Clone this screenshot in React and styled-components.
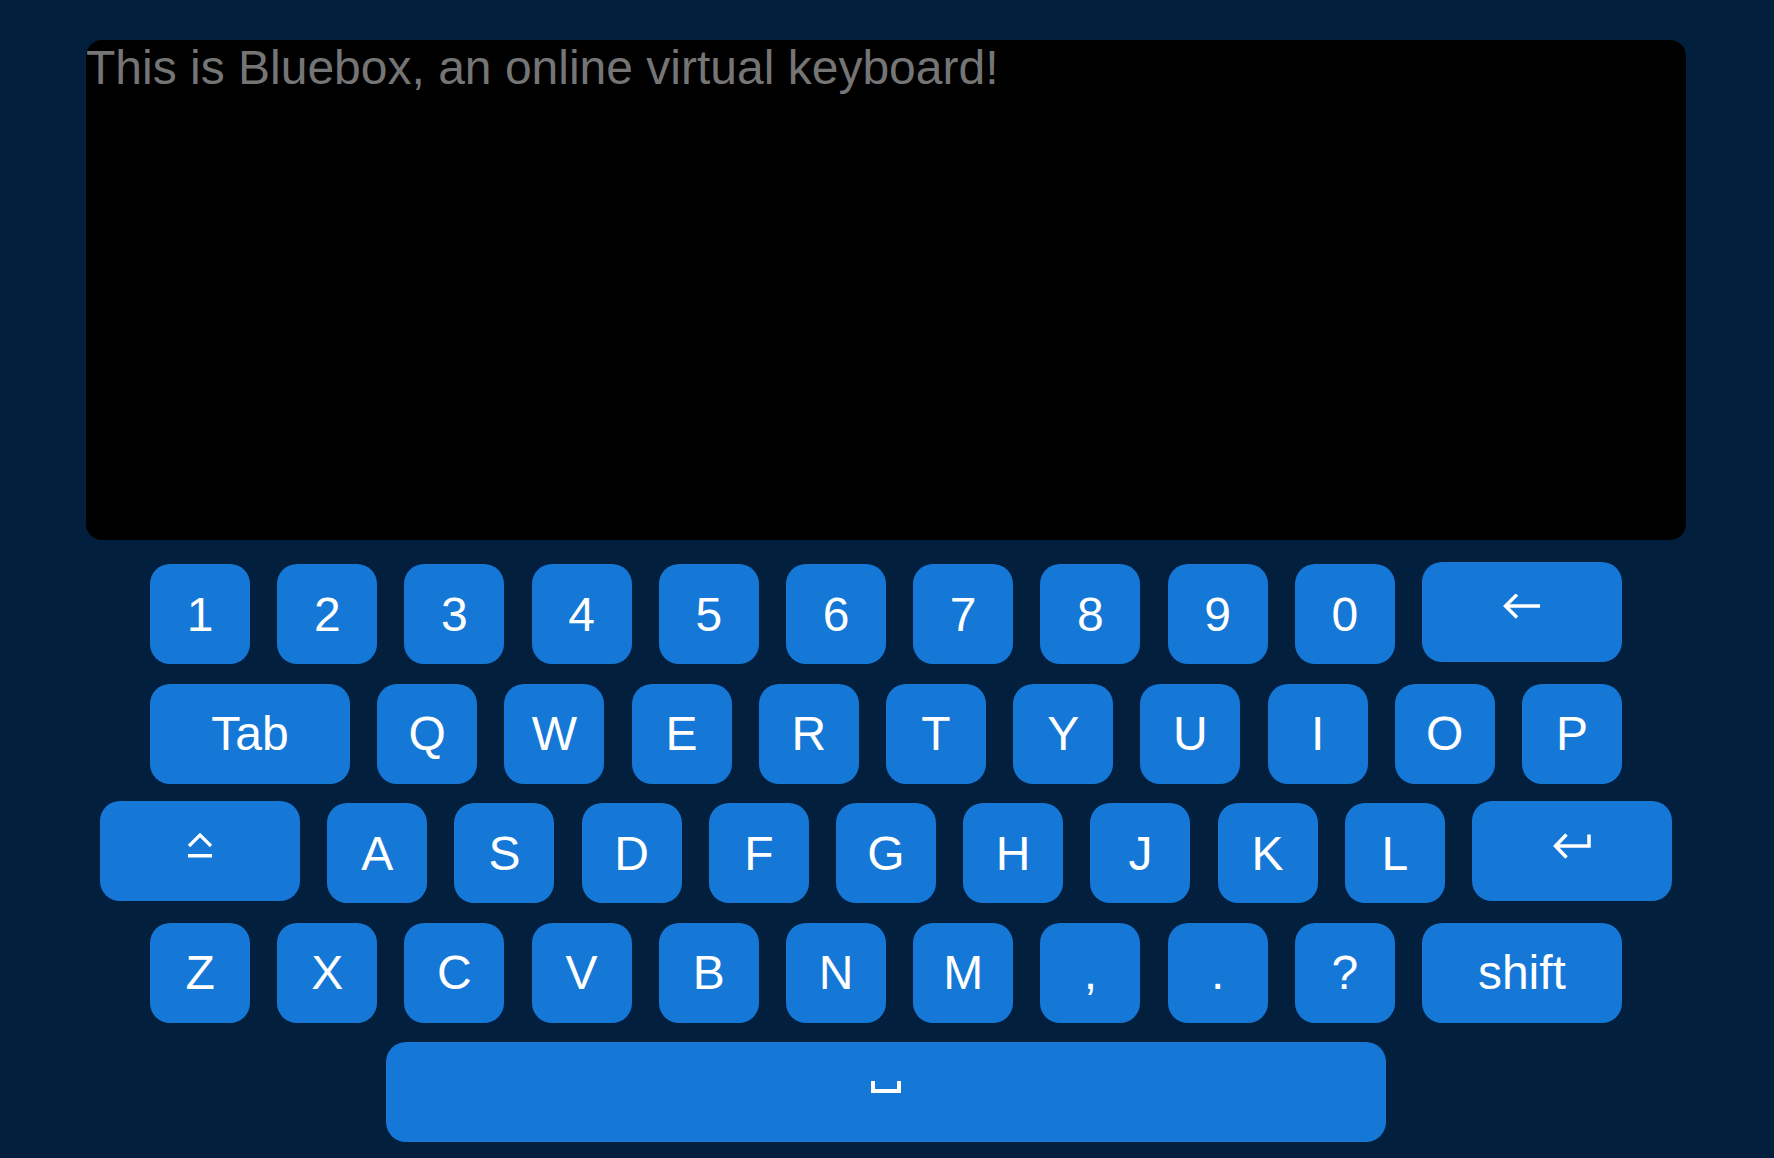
import styled, { createGlobalStyle } from "styled-components";

const GlobalStyle = createGlobalStyle`
  html, body {
    margin: 0;
    padding: 0;
    background: #021f3d;
  }
  body {
    font-family: "Liberation Sans", Arial, Helvetica, sans-serif;
  }
`;

const Page = styled.main`
  min-height: 1158px;
  box-sizing: border-box;
  padding: 40px 2px 0 0;
  display: flex;
  flex-direction: column;
  align-items: center;
  gap: 24px;
`;

const TextBox = styled.textarea`
  width: 1600px;
  height: 500px;
  box-sizing: border-box;
  margin: 0;
  padding: 0;
  border: none;
  outline: none;
  resize: none;
  border-radius: 16px;
  background: #000;
  color: #fff;
  font-family: "Liberation Sans", Arial, Helvetica, sans-serif;
  font-size: 48px;
  line-height: normal;
  &::placeholder {
    color: #757575;
  }
`;

const Keyboard = styled.section`
  display: flex;
  flex-direction: column;
  align-items: center;
  gap: 19.5px;
`;

const Row = styled.div`
  display: flex;
  gap: 27.2px;
`;

const Key = styled.button`
  width: ${({ $wide }) => ($wide ? "200px" : "100px")};
  height: 100px;
  margin: ${({ $lift }) => ($lift ? "-2px 0 2px" : "0")};
  padding: 0;
  border: none;
  border-radius: 20px;
  background: #1577d6;
  color: #fff;
  font-family: "Liberation Sans", Arial, Helvetica, sans-serif;
  font-size: 48px;
  line-height: normal;
  display: flex;
  align-items: center;
  justify-content: center;
  cursor: pointer;
`;

const SpaceKey = styled(Key)`
  width: 1000px;
`;

const Glyph = styled.svg`
  display: block;
  width: 40px;
  height: 36px;
  color: #fff;
`;

const BackIcon = () => (
  <Glyph viewBox="0 0 40 36">
    <path d="M3 12H38M15 0.5L3.5 12L15 23.5" fill="none" stroke="currentColor" strokeWidth="3.5" />
  </Glyph>
);

const EnterIcon = () => (
  <Glyph viewBox="0 0 40 36">
    <path d="M3 13H37V1.5M14.5 1.5L3.5 13L14.5 24.5" fill="none" stroke="currentColor" strokeWidth="3.5" />
  </Glyph>
);

const CapsIcon = () => (
  <Glyph viewBox="0 0 40 36">
    <path d="M9 13L20 2L31 13" fill="none" stroke="currentColor" strokeWidth="3.2" />
    <rect x="8" y="21" width="24" height="3.5" fill="currentColor" />
  </Glyph>
);

const SpaceIcon = () => (
  <Glyph viewBox="0 0 40 36">
    <path d="M5 7V19H35V7H31V15H9V7Z" fill="currentColor" />
  </Glyph>
);

const digits = ["1", "2", "3", "4", "5", "6", "7", "8", "9", "0"];
const top = ["Q", "W", "E", "R", "T", "Y", "U", "I", "O", "P"];
const middle = ["A", "S", "D", "F", "G", "H", "J", "K", "L"];
const bottom = ["Z", "X", "C", "V", "B", "N", "M", ",", ".", "?"];

export default function App() {
  return (
    <>
      <GlobalStyle />
      <Page>
        <TextBox placeholder="This is Bluebox, an online virtual keyboard!" />
        <Keyboard>
          <Row>
            {digits.map((k) => (
              <Key key={k}>{k}</Key>
            ))}
            <Key $wide $lift aria-label="backspace">
              <BackIcon />
            </Key>
          </Row>
          <Row>
            <Key $wide>Tab</Key>
            {top.map((k) => (
              <Key key={k}>{k}</Key>
            ))}
          </Row>
          <Row>
            <Key $wide $lift aria-label="caps lock">
              <CapsIcon />
            </Key>
            {middle.map((k) => (
              <Key key={k}>{k}</Key>
            ))}
            <Key $wide $lift aria-label="enter">
              <EnterIcon />
            </Key>
          </Row>
          <Row>
            {bottom.map((k) => (
              <Key key={k}>{k}</Key>
            ))}
            <Key $wide>shift</Key>
          </Row>
          <Row>
            <SpaceKey aria-label="space">
              <SpaceIcon />
            </SpaceKey>
          </Row>
        </Keyboard>
      </Page>
    </>
  );
}
